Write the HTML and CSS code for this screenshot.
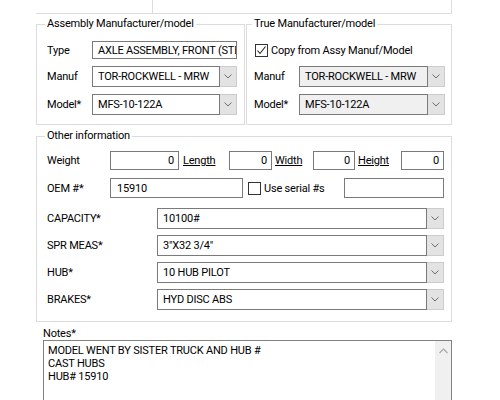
FILE: index.html
```html
<!DOCTYPE html>
<html>
<head>
<meta charset="utf-8">
<link rel="stylesheet" href="styles.css">
</head>
<body>
<div class="page">
  <div class="top-strip">
    <div class="strip-cell first"></div>
    <div class="strip-cell rest"></div>
  </div>

  <div class="group-row">
    <fieldset class="group assy">
      <legend class="legend">Assembly Manufacturer/model</legend>
      <div class="group-body">
        <div class="frow short">
          <span class="flabel">Type</span>
          <div class="textbox grow"><span class="tb-text">AXLE ASSEMBLY, FRONT (STEER)</span></div>
        </div>
        <div class="frow">
          <span class="flabel">Manuf</span>
          <div class="combo grow">
            <div class="combo-text">TOR-ROCKWELL - MRW</div>
            <div class="combo-btn"><svg width="8" height="5" viewBox="0 0 8 5"><polyline points="0.5,0.5 4,4 7.5,0.5" fill="none" stroke="#6d6d6d" stroke-width="1"/></svg></div>
          </div>
        </div>
        <div class="frow">
          <span class="flabel">Model*</span>
          <div class="combo grow">
            <div class="combo-text">MFS-10-122A</div>
            <div class="combo-btn"><svg width="8" height="5" viewBox="0 0 8 5"><polyline points="0.5,0.5 4,4 7.5,0.5" fill="none" stroke="#6d6d6d" stroke-width="1"/></svg></div>
          </div>
        </div>
      </div>
    </fieldset>

    <fieldset class="group true">
      <legend class="legend">True Manufacturer/model</legend>
      <div class="group-body">
        <div class="frow short">
          <span class="check checked"><svg width="11" height="11" viewBox="0 0 11 11"><polyline points="1.5,5.5 4,8.5 9.5,1.5" fill="none" stroke="#222" stroke-width="1.1"/></svg></span>
          <span class="check-label">Copy from Assy Manuf/Model</span>
        </div>
        <div class="frow">
          <span class="flabel">Manuf</span>
          <div class="combo grow disabled">
            <div class="combo-text">TOR-ROCKWELL - MRW</div>
            <div class="combo-btn"><svg width="8" height="5" viewBox="0 0 8 5"><polyline points="0.5,0.5 4,4 7.5,0.5" fill="none" stroke="#6d6d6d" stroke-width="1"/></svg></div>
          </div>
        </div>
        <div class="frow">
          <span class="flabel">Model*</span>
          <div class="combo grow disabled">
            <div class="combo-text">MFS-10-122A</div>
            <div class="combo-btn"><svg width="8" height="5" viewBox="0 0 8 5"><polyline points="0.5,0.5 4,4 7.5,0.5" fill="none" stroke="#6d6d6d" stroke-width="1"/></svg></div>
          </div>
        </div>
      </div>
    </fieldset>
  </div>

  <fieldset class="group other">
    <legend class="legend">Other information</legend>
    <div class="group-body other-body">
      <div class="orow dims">
        <span class="olabel">Weight</span>
        <div class="textbox num w-weight"><span class="tb-text">0</span></div>
        <span class="link l-length">Length</span>
        <div class="textbox num w-length"><span class="tb-text">0</span></div>
        <span class="link l-width">Width</span>
        <div class="textbox num w-width"><span class="tb-text">0</span></div>
        <span class="link l-height">Height</span>
        <div class="textbox num w-height"><span class="tb-text">0</span></div>
      </div>
      <div class="orow oem">
        <span class="olabel">OEM #*</span>
        <div class="textbox w-oem"><span class="tb-text">15910</span></div>
        <span class="check"></span>
        <span class="check-label">Use serial #s</span>
        <div class="textbox w-serial"></div>
      </div>
      <div class="crow">
        <span class="clabel">CAPACITY*</span>
        <div class="combo grow">
          <div class="combo-text">10100#</div>
          <div class="combo-btn"><svg width="8" height="5" viewBox="0 0 8 5"><polyline points="0.5,0.5 4,4 7.5,0.5" fill="none" stroke="#6d6d6d" stroke-width="1"/></svg></div>
        </div>
      </div>
      <div class="crow">
        <span class="clabel">SPR MEAS*</span>
        <div class="combo grow">
          <div class="combo-text">3"X32 3/4"</div>
          <div class="combo-btn"><svg width="8" height="5" viewBox="0 0 8 5"><polyline points="0.5,0.5 4,4 7.5,0.5" fill="none" stroke="#6d6d6d" stroke-width="1"/></svg></div>
        </div>
      </div>
      <div class="crow">
        <span class="clabel">HUB*</span>
        <div class="combo grow">
          <div class="combo-text">10 HUB PILOT</div>
          <div class="combo-btn"><svg width="8" height="5" viewBox="0 0 8 5"><polyline points="0.5,0.5 4,4 7.5,0.5" fill="none" stroke="#6d6d6d" stroke-width="1"/></svg></div>
        </div>
      </div>
      <div class="crow">
        <span class="clabel">BRAKES*</span>
        <div class="combo grow">
          <div class="combo-text">HYD DISC ABS</div>
          <div class="combo-btn"><svg width="8" height="5" viewBox="0 0 8 5"><polyline points="0.5,0.5 4,4 7.5,0.5" fill="none" stroke="#6d6d6d" stroke-width="1"/></svg></div>
        </div>
      </div>
    </div>
  </fieldset>

  <div class="notes">
    <div class="notes-label">Notes*</div>
    <div class="memo">
      <div class="memo-text">
        <div>MODEL WENT BY SISTER TRUCK AND HUB #</div>
        <div>CAST HUBS</div>
        <div>HUB# 15910</div>
      </div>
      <div class="scrollbar"><svg width="9" height="6" viewBox="0 0 9 6"><polyline points="0.5,5 4.5,1 8.5,5" fill="none" stroke="#a8a8a8" stroke-width="1.2"/></svg></div>
    </div>
  </div>
</div>
</body>
</html>
```

FILE: styles.css
```css
html, body {
  margin: 0;
  padding: 0;
  background: #ffffff;
}

body {
  font-family: Roboto, "Liberation Sans", Arial, sans-serif;
  font-size: 11px;
  letter-spacing: -0.2px;
  color: #000000;
  overflow: hidden;
}

.page {
  margin-left: 36px;
  width: 416px;
}

/* fragment of the group box above */
.top-strip {
  display: flex;
  height: 13px;
  border-bottom: 1px solid #dcdcdc;
}

.strip-cell {
  border-right: 1px solid #dcdcdc;
}

.strip-cell.first {
  width: 116px;
}

.strip-cell.rest {
  flex: 1;
}

/* group boxes */
.group-row {
  display: flex;
  gap: 1px;
  margin-top: 3px;
}

.group {
  margin: 0;
  padding: 0;
  min-width: 0;
  border: 1px solid #dcdcdc;
}

.legend {
  padding: 0 2px;
  line-height: 14px;
  height: 14px;
}

.assy {
  width: 209px;
  box-sizing: border-box;
}

.assy .legend {
  margin-left: 8px;
}

.true {
  width: 206px;
  box-sizing: border-box;
}

.true .legend {
  margin-left: 5px;
}

.group-body {
  display: flex;
  flex-direction: column;
  gap: 7px;
}

.assy .group-body {
  padding: 10px 7px 9px 10px;
}

.true .group-body {
  padding: 10px 6px 9px 7px;
}

.frow {
  display: flex;
  align-items: center;
  height: 21px;
}

.frow.short {
  height: 18px;
}

.flabel {
  width: 45px;
  flex: none;
  white-space: nowrap;
}

.grow {
  flex: 1;
  min-width: 0;
}

/* text boxes */
.textbox {
  box-sizing: border-box;
  height: 100%;
  border: 1px solid #7a7a7a;
  background: #ffffff;
  display: flex;
  align-items: center;
  padding: 0 4px 0 5px;
  overflow: hidden;
  white-space: nowrap;
}

.textbox.num {
  justify-content: flex-end;
}

.tb-text {
  white-space: nowrap;
}

/* combo boxes */
.combo {
  box-sizing: border-box;
  height: 21px;
  display: flex;
}

.combo-text {
  flex: 1;
  min-width: 0;
  border: 1px solid #7a7a7a;
  background: #ffffff;
  display: flex;
  align-items: center;
  padding: 0 4px 0 5px;
  white-space: nowrap;
  overflow: hidden;
}

.combo.disabled .combo-text {
  background: #f0f0f0;
}

.combo-btn {
  width: 17px;
  flex: none;
  box-sizing: border-box;
  border: 1px solid #cccccc;
  border-left: none;
  background: #e3e3e3;
  display: flex;
  align-items: center;
  justify-content: center;
}

/* check boxes */
.check {
  box-sizing: border-box;
  width: 13px;
  height: 13px;
  flex: none;
  border: 1px solid #333333;
  background: #ffffff;
  display: flex;
  align-items: center;
  justify-content: center;
  margin-left: 1px;
}

.check-label {
  margin-left: 3px;
  white-space: nowrap;
}

/* other information */
.other {
  margin-top: 4px;
  width: 416px;
  box-sizing: border-box;
}

.other .legend {
  margin-left: 8px;
}

.other-body {
  padding: 8px 7px 11px 10px;
  gap: 0;
}

.orow {
  display: flex;
  align-items: center;
}

.orow.dims {
  height: 19px;
}

.orow.oem {
  height: 20px;
  margin-top: 8px;
  margin-bottom: 10px;
}

.olabel {
  width: 63px;
  flex: none;
}

.w-weight { width: 69px; flex: none; }
.w-length { width: 43px; flex: none; }
.w-width  { width: 42px; flex: none; }
.w-height { width: 43px; flex: none; }
.w-oem    { width: 133px; flex: none; padding-left: 6px; }
.w-serial { width: 100px; flex: none; margin-left: auto; }

.oem .check {
  margin-left: 5px;
}

.link {
  flex: none;
  text-decoration: underline;
  color: #000000;
  white-space: nowrap;
}

.l-length { width: 46px; padding-left: 4px; }
.l-width  { width: 38px; padding-left: 3px; }
.l-height { width: 43px; padding-left: 3px; }

.crow {
  display: flex;
  align-items: center;
  height: 21px;
}

.crow + .crow {
  margin-top: 6px;
}

.clabel {
  width: 110px;
  flex: none;
  white-space: nowrap;
}

/* notes */
.notes {
  margin-left: 7px;
  margin-top: 5px;
}

.notes-label {
  line-height: 13px;
  height: 13px;
}

.memo {
  box-sizing: border-box;
  width: 409px;
  height: 70px;
  border: 1px solid #828282;
  display: flex;
}

.memo-text {
  flex: 1;
  padding: 3px 4px;
  line-height: 13px;
  white-space: nowrap;
  overflow: hidden;
}

.scrollbar {
  width: 16px;
  flex: none;
  background: #f0f0f0;
  display: flex;
  justify-content: center;
  align-items: flex-start;
  padding-top: 7px;
  box-sizing: border-box;
}
```
